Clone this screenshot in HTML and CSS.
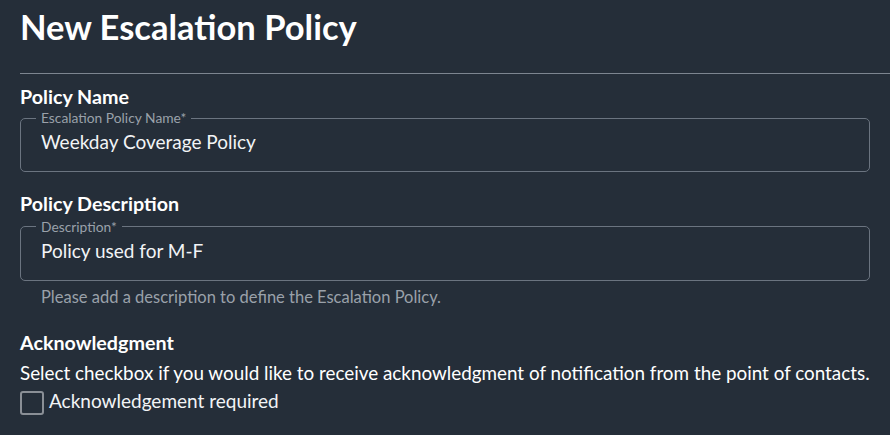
FILE: index.html
```html
<!DOCTYPE html>
<html lang="en">
<head>
<meta charset="utf-8">
<title>New Escalation Policy</title>
<link rel="stylesheet" href="styles.css">
</head>
<body>
<div class="page">
  <h1 class="title">New Escalation Policy</h1>
  <div class="divider"></div>
  <form class="form">
    <h2 class="section">Policy Name</h2>
    <fieldset class="field">
      <legend class="legend">Escalation Policy Name*</legend>
      <div class="value">Weekday Coverage Policy</div>
    </fieldset>

    <h2 class="section section-gap">Policy Description</h2>
    <fieldset class="field field-lower">
      <legend class="legend">Description*</legend>
      <div class="value">Policy used for M-F</div>
    </fieldset>
    <p class="helper">Please add a description to define the Escalation Policy.</p>

    <h2 class="section section-gap2">Acknowledgment</h2>
    <p class="text">Select checkbox if you would like to receive acknowledgment of notification from the point of contacts.</p>
    <label class="check-row">
      <span class="checkbox"></span>
      <span class="check-label">Acknowledgement required</span>
    </label>
  </form>
</div>
</body>
</html>
```

FILE: styles.css
```css
html, body {
  margin: 0;
  padding: 0;
  background: #252e39;
}
body {
  font-family: Lato, "Open Sans", sans-serif;
  color: #ffffff;
  width: 890px;
  height: 435px;
  overflow: hidden;
}
.page {
  padding-top: 7px;
}
.title {
  margin: 0 0 0 20px;
  font-size: 34.5px;
  line-height: 40px;
  font-weight: 700;
  color: #ffffff;
}
.divider {
  margin: 26px 0 0 20px;
  height: 1px;
  background: #7d8590;
}
.form {
  padding: 0 20px;
}
.section {
  margin: 10.5px 0 0 0;
  font-size: 19.7px;
  line-height: 24px;
  font-weight: 700;
  color: #ffffff;
}
.section-gap {
  margin-top: 19.5px;
}
.section-gap2 {
  margin-top: 25px;
}
.field {
  margin: 2.5px 0 0 0;
  padding: 5px 20px 17px 20px;
  border: 1px solid #6b7480;
  border-radius: 5px;
  min-width: 0;
}
.field-lower {
  margin-top: 4px;
}
.legend {
  margin-left: -5px;
  padding: 0 5px;
  font-size: 13.8px;
  line-height: 14px;
  color: #9aa1aa;
}
.value {
  font-size: 19px;
  line-height: 24px;
  color: #f2f4f6;
}
.helper {
  margin: 7px 0 0 21px;
  font-size: 16.5px;
  line-height: 18px;
  color: #9aa1aa;
}
.text {
  margin: 6.25px 0 0 0;
  font-size: 18.85px;
  line-height: 24px;
  color: #ffffff;
  white-space: nowrap;
}
.check-row {
  display: flex;
  align-items: flex-start;
  gap: 5px;
  margin-top: 5.35px;
}
.checkbox {
  box-sizing: border-box;
  width: 24px;
  height: 24px;
  margin-top: 1px;
  border: 2px solid #8a8f96;
  border-radius: 3px;
}
.check-label {
  font-size: 19px;
  line-height: 22px;
  color: #f2f4f6;
}
```
